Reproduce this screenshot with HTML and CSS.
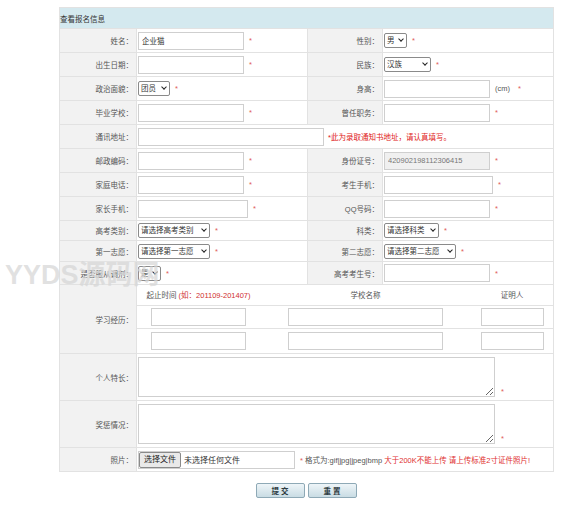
FILE: index.html
```html
<!DOCTYPE html>
<html lang="zh-CN">
<head>
<meta charset="utf-8">
<title>查看报名信息</title>
<link rel="stylesheet" href="styles.css">
</head>
<body>
<div class="page">
  <table class="form">
    <colgroup><col class="c1"><col class="c2"><col class="c3"><col class="c4"></colgroup>
    <tr class="head"><th colspan="4">查看报名信息</th></tr>
    <tr class="h24">
      <td class="lb">姓名：</td>
      <td class="val"><input class="ipt w105" type="text" value="企业猫"><span class="req">*</span></td>
      <td class="lb">性别：</td>
      <td class="val"><span class="selw"><select class="sel w22"><option>男</option></select></span><span class="req">*</span></td>
    </tr>
    <tr class="h24">
      <td class="lb">出生日期：</td>
      <td class="val"><input class="ipt w105" type="text"><span class="req">*</span></td>
      <td class="lb">民族：</td>
      <td class="val"><span class="selw"><select class="sel w47"><option>汉族</option></select></span><span class="req">*</span></td>
    </tr>
    <tr class="h24">
      <td class="lb">政治面貌：</td>
      <td class="val"><span class="selw"><select class="sel w32"><option>团员</option></select></span><span class="req">*</span></td>
      <td class="lb">身高：</td>
      <td class="val"><input class="ipt w105" type="text"><span class="unit">(cm)</span><span class="req">*</span></td>
    </tr>
    <tr class="h24">
      <td class="lb">毕业学校：</td>
      <td class="val"><input class="ipt w105" type="text"><span class="req">*</span></td>
      <td class="lb">曾任职务：</td>
      <td class="val"><input class="ipt w105" type="text"><span class="req">*</span></td>
    </tr>
    <tr class="h24">
      <td class="lb">通讯地址：</td>
      <td class="val" colspan="3"><input class="ipt w185" type="text"><span class="note">*此为录取通知书地址，请认真填写。</span></td>
    </tr>
    <tr class="h24">
      <td class="lb">邮政编码：</td>
      <td class="val"><input class="ipt w105" type="text"><span class="req">*</span></td>
      <td class="lb">身份证号：</td>
      <td class="val"><input class="ipt w105 ro" type="text" value="420902198112306415" readonly><span class="req">*</span></td>
    </tr>
    <tr class="h24">
      <td class="lb">家庭电话：</td>
      <td class="val"><input class="ipt w105" type="text"><span class="req">*</span></td>
      <td class="lb">考生手机：</td>
      <td class="val"><input class="ipt w108" type="text"><span class="req">*</span></td>
    </tr>
    <tr class="h24">
      <td class="lb">家长手机：</td>
      <td class="val"><input class="ipt w109" type="text"><span class="req">*</span></td>
      <td class="lb">QQ号码：</td>
      <td class="val"><input class="ipt w105" type="text"><span class="req">*</span></td>
    </tr>
    <tr class="h20">
      <td class="lb">高考类别：</td>
      <td class="val"><span class="selw"><select class="sel w72"><option>请选择高考类别</option></select></span><span class="req">*</span></td>
      <td class="lb">科类：</td>
      <td class="val"><span class="selw"><select class="sel w55"><option>请选择科类</option></select></span><span class="req">*</span></td>
    </tr>
    <tr class="h21">
      <td class="lb">第一志愿：</td>
      <td class="val"><span class="selw"><select class="sel w72"><option>请选择第一志愿</option></select></span><span class="req">*</span></td>
      <td class="lb">第二志愿：</td>
      <td class="val"><span class="selw"><select class="sel w72"><option>请选择第二志愿</option></select></span><span class="req">*</span></td>
    </tr>
    <tr class="h23">
      <td class="lb">是否服从调剂：</td>
      <td class="val"><span class="selw"><select class="sel w22"><option>是</option></select></span><span class="req">*</span></td>
      <td class="lb">高考考生号：</td>
      <td class="val"><input class="ipt w105" type="text"><span class="req">*</span></td>
    </tr>
    <tr>
      <td class="lb">学习经历：</td>
      <td class="edu" colspan="3">
        <table class="sub">
          <colgroup><col class="s1"><col class="s2"><col class="s3"></colgroup>
          <tr class="sh">
            <td>起止时间 <span class="eg">(如：201109-201407)</span></td>
            <td>学校名称</td>
            <td>证明人</td>
          </tr>
          <tr class="sr1">
            <td><input class="ipt w95" type="text"></td>
            <td><input class="ipt w155" type="text"></td>
            <td><input class="ipt w63" type="text"></td>
          </tr>
          <tr class="sr2">
            <td><input class="ipt w95" type="text"></td>
            <td><input class="ipt w155" type="text"></td>
            <td><input class="ipt w63" type="text"></td>
          </tr>
        </table>
      </td>
    </tr>
    <tr class="h47">
      <td class="lb">个人特长：</td>
      <td class="val" colspan="3"><textarea class="ta"></textarea><span class="req">*</span></td>
    </tr>
    <tr class="h47">
      <td class="lb">奖惩情况：</td>
      <td class="val" colspan="3"><textarea class="ta"></textarea><span class="req">*</span></td>
    </tr>
    <tr class="h24">
      <td class="lb">照片：</td>
      <td class="val" colspan="3">
        <span class="file"><span class="file-btn">选择文件</span><span class="file-name">未选择任何文件</span></span><span class="fmt"><span class="req-i">*</span> 格式为:gif|jpg|jpeg|bmp <span class="warn">大于200K不能上传 请上传标准2寸证件照片!</span></span>
      </td>
    </tr>
  </table>
  <div class="actions">
    <button class="btn" type="button">提 交</button>
    <button class="btn" type="button">重 置</button>
  </div>
  <div class="watermark">YYDS源码网</div>
</div>
</body>
</html>
```

FILE: styles.css
```css
* { box-sizing: border-box; }
body {
  margin: 0;
  background: #fff;
  font-family: "Liberation Sans", "Noto Sans CJK SC", sans-serif;
  font-size: 7.5px;
  color: #555;
}
.page {
  position: relative;
  width: 588px;
  height: 523px;
  padding: 7px 0 0 59px;
}
.form {
  width: 494px;
  table-layout: fixed;
  border-collapse: collapse;
  border: 1px solid #dcdcdc;
}
.c1 { width: 77px; }
.c2 { width: 171px; }
.c3 { width: 75px; }
.c4 { width: 171px; }
.form > tbody > tr > td,
.form > tbody > tr > th {
  border: 1px solid #e2e2e2;
  padding: 0;
  vertical-align: middle;
}
.head th {
  height: 21px;
  background: #d4e9ef;
  color: #333;
  font-weight: normal;
  text-align: left;
  padding-left: 4px;
}
.h20 > td { height: 20px; }
.h21 > td { height: 21px; }
.h23 > td { height: 23px; }
.h24 > td { height: 24px; }
.h47 > td { height: 47px; }
.lb {
  background: #f2f2f2;
  text-align: right;
  padding-right: 3px !important;
  color: #555;
  white-space: nowrap;
}
.val { padding-left: 1px !important; white-space: nowrap; }
.ipt {
  height: 18px;
  border: 1px solid #cfcfcf;
  background: #fff;
  font-family: inherit;
  font-size: 7.5px;
  color: #333;
  padding: 0 3px;
  margin: 0;
  vertical-align: middle;
}
.ro { background: #f0f0f0; color: #777; }
.w63 { width: 63px; }
.w95 { width: 95px; }
.w105 { width: 106px; }
.w108 { width: 109px; }
.w109 { width: 110px; }
.w155 { width: 155px; }
.w185 { width: 186px; }
.selw {
  position: relative;
  display: inline-block;
  vertical-align: middle;
  line-height: 0;
}
.selw::after {
  content: "";
  position: absolute;
  right: 4px;
  top: 4px;
  width: 3px;
  height: 3px;
  border-right: 1.5px solid #222;
  border-bottom: 1.5px solid #222;
  transform: rotate(45deg);
  pointer-events: none;
}
.sel {
  -webkit-appearance: none;
  appearance: none;
  height: 15px;
  font-family: inherit;
  font-size: 7.5px;
  line-height: 13px;
  color: #333;
  border: 1px solid #8a8a8a;
  border-radius: 2px;
  background: #fff;
  padding: 0 10px 0 2px;
  margin: 0;
  vertical-align: middle;
}
.w22 { width: 23px; }
.w32 { width: 32px; }
.w47 { width: 47px; }
.w55 { width: 55px; }
.w72 { width: 72px; }
.req {
  color: #e05a5a;
  margin-left: 5px;
  vertical-align: middle;
}
.unit { margin-left: 5px; vertical-align: middle; color: #555; }
.unit + .req { margin-left: 8px; }
.note {
  color: #e02020;
  margin-left: 4px;
  vertical-align: middle;
}
.edu { padding: 0 !important; }
.sub {
  width: 100%;
  table-layout: fixed;
  border-collapse: collapse;
}
.s1 { width: 123px; }
.s2 { width: 211px; }
.sub td {
  padding: 0;
  text-align: center;
  vertical-align: middle;
  border-bottom: 1px solid #e2e2e2;
}
.sub tr:last-child td { border-bottom: 0; }
.sh td { height: 20px; color: #555; }
.sr1 td { height: 23px; }
.sr2 td { height: 25px; }
.eg { color: #d03030; }
.ta {
  width: 357px;
  height: 40px;
  border: 1px solid #cfcfcf;
  margin: 0;
  vertical-align: bottom;
  font-family: inherit;
  font-size: 7.5px;
}
.ta + .req { vertical-align: bottom; margin-left: 6px; position: relative; top: -1px; }
.file {
  display: inline-flex;
  align-items: center;
  width: 157px;
  height: 18px;
  border: 1px solid #cfcfcf;
  vertical-align: middle;
}
.file-btn {
  height: 16px;
  line-height: 14px;
  padding: 0 4px;
  border: 1px solid #8a8a8a;
  border-radius: 2px;
  background: #e9e9e9;
  color: #222;
  font-size: 8px;
}
.file-name { margin-left: 3px; color: #333; font-size: 8px; }
.fmt { margin-left: 5px; vertical-align: middle; color: #555; }
.req-i { color: #e05a5a; }
.warn { color: #e03030; }
.actions {
  width: 494px;
  margin-top: 11px;
  display: flex;
  justify-content: center;
  gap: 3px;
}
.btn {
  width: 49px;
  height: 15px;
  padding: 0;
  border: 1px solid #8ea9b6;
  border-radius: 2px;
  background: linear-gradient(#eef5f8, #c9dce4);
  font-family: inherit;
  font-size: 7.5px;
  font-weight: bold;
  color: #2d3a40;
}
.watermark {
  position: absolute;
  left: 5px;
  top: 253px;
  font-family: "Liberation Sans", "Noto Sans CJK SC", sans-serif;
  font-size: 27px;
  font-weight: bold;
  color: rgba(215, 215, 215, 0.75);
  pointer-events: none;
  white-space: nowrap;
}
```
